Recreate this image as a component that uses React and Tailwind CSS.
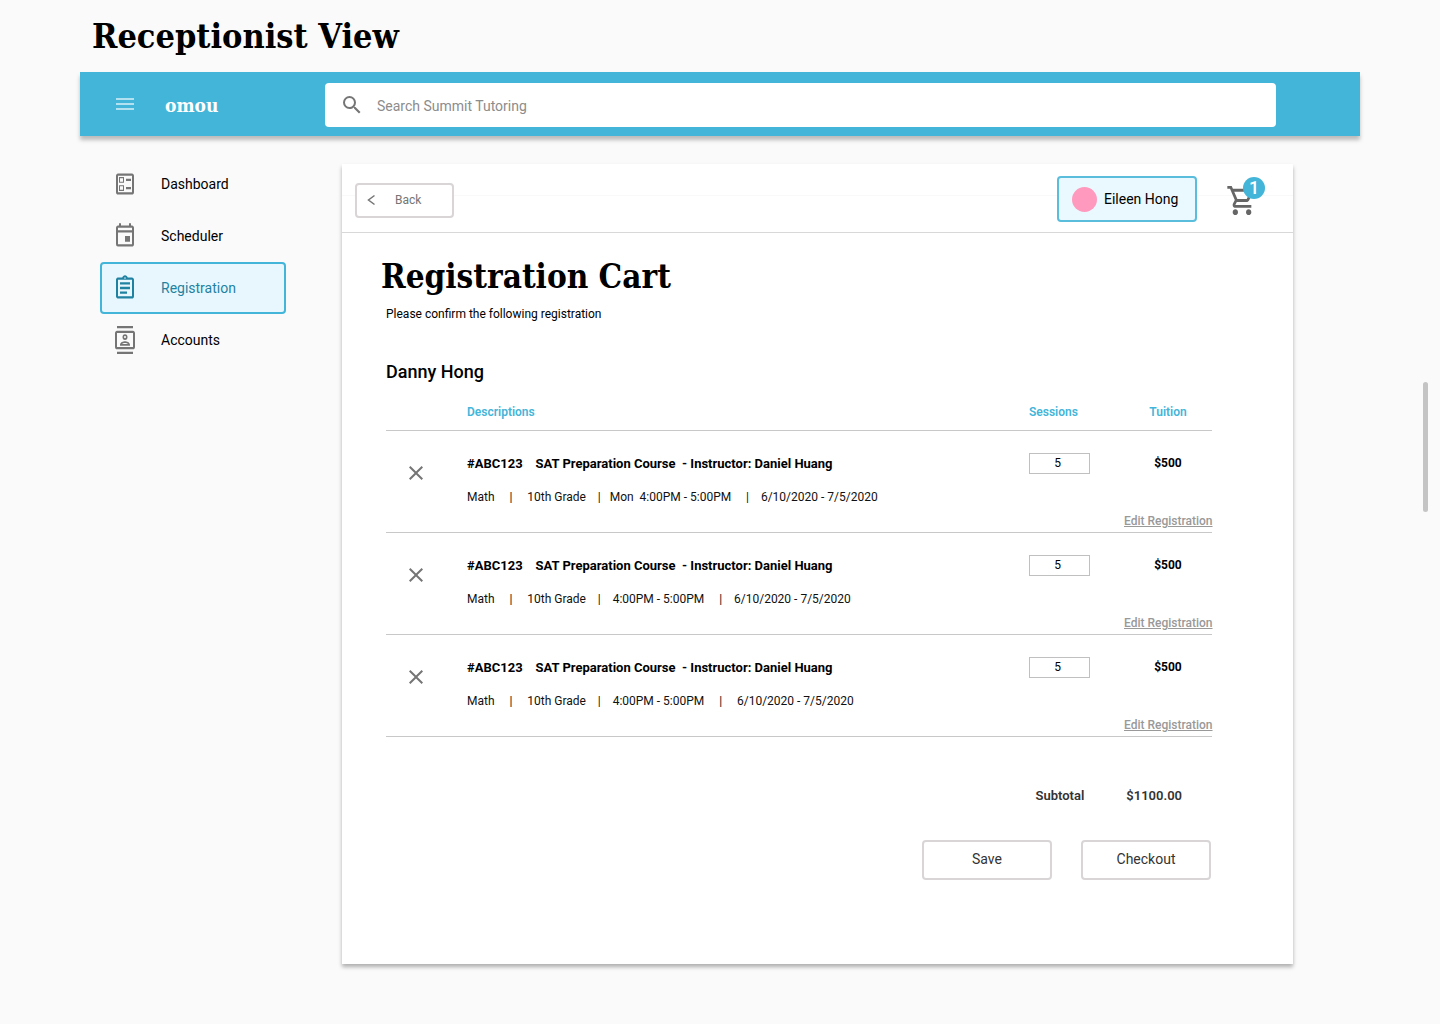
import {
  MdClose,
  MdMenu,
  MdOutlineAssignment,
  MdOutlineBallot,
  MdOutlineContacts,
  MdOutlineInsertInvitation,
  MdOutlineShoppingCart,
  MdSearch,
} from "react-icons/md";

const navItems = [
  { label: "Dashboard", Icon: MdOutlineBallot },
  { label: "Scheduler", Icon: MdOutlineInsertInvitation },
  { label: "Registration", Icon: MdOutlineAssignment, active: true },
  { label: "Accounts", Icon: MdOutlineContacts },
];

const title = "#ABC123    SAT Preparation Course  - Instructor: Daniel Huang";

const registrations = [
  { id: 1, details: "Math     |     10th Grade    |   Mon  4:00PM - 5:00PM     |    6/10/2020 - 7/5/2020" },
  { id: 2, details: "Math     |     10th Grade    |    4:00PM - 5:00PM     |    6/10/2020 - 7/5/2020" },
  { id: 3, details: "Math     |     10th Grade    |    4:00PM - 5:00PM     |     6/10/2020 - 7/5/2020" },
];

function TopBar() {
  return (
    <header className="flex h-16 items-center bg-[#43b5d9] pr-[84px] shadow-[0_4px_4px_rgba(0,0,0,0.25)]">
      <div className="flex w-[245px] shrink-0 items-center pl-[33px]">
        <button type="button" aria-label="Menu" className="text-white/60">
          <MdMenu className="size-6" />
        </button>
        <a href="#home" className="mt-0.5 ml-7 font-['Roboto_Slab','DejaVu_Serif_Condensed','DejaVu_Serif',serif] text-[19px] leading-6 font-bold text-white">
          omou
        </a>
      </div>
      <div className="mt-0.5 flex h-11 flex-1 items-center gap-[13px] rounded bg-white pl-[15px]">
        <MdSearch className="size-6 text-[#757575]" aria-hidden="true" />
        <input
          type="search"
          aria-label="Search"
          placeholder="Search Summit Tutoring"
          className="h-full min-w-0 flex-1 bg-transparent pt-0.5 text-sm text-black outline-none placeholder:text-[#8c8c8c]"
        />
      </div>
    </header>
  );
}

function Sidebar() {
  return (
    <nav className="mt-[22px] ml-5 w-[186px] shrink-0">
      {navItems.map(({ label, Icon, active }) => (
        <a
          key={label}
          href={"#" + label.toLowerCase()}
          aria-current={active ? "page" : undefined}
          className={
            "flex h-[52px] items-center gap-6 rounded border-2 pl-[11px] text-sm " +
            (active ? "border-[#43b5d9] bg-[#e8f7fe] text-[#1f82a1]" : "border-transparent text-black")
          }
        >
          <Icon
            preserveAspectRatio="none"
            aria-hidden="true"
            className={active ? "h-7 w-6 text-[#1f82a1]" : "h-7 w-6 text-[#757575]"}
          />
          {label}
        </a>
      ))}
    </nav>
  );
}

function Toolbar() {
  return (
    <div className="flex h-[69px] items-center border-b border-[#d8d8d8] bg-[linear-gradient(#f9f9f9,#f9f9f9)] bg-[length:100%_1px] bg-[position:0_31px] bg-no-repeat pr-7 pl-[13px]">
      <button
        type="button"
        className="mt-1 flex h-[35px] w-[99px] items-center rounded border-2 border-[#d9d5d7] bg-white pl-[10px] text-xs text-[#757575]"
      >
        <svg viewBox="0 0 8 12" className="h-3 w-2" fill="none" stroke="currentColor" strokeWidth="1.5" aria-hidden="true">
          <path d="M7.5 1.5 1.5 6l6 4.5" />
        </svg>
        <span className="ml-5">Back</span>
      </button>
      <button
        type="button"
        className="mt-0.5 ml-auto flex h-[46px] w-[140px] items-center gap-[7px] rounded border-2 border-[#5abddb] bg-[#eaf9ff] pl-[13px] text-sm whitespace-nowrap text-black"
      >
        <span className="size-[25px] rounded-full bg-[#ff99bd]" />
        Eileen Hong
      </button>
      <button type="button" aria-label="Cart, 1 item" className="relative mt-1 ml-[29px] h-[35px] w-[39px]">
        <MdOutlineShoppingCart preserveAspectRatio="none" className="h-[35px] w-8 text-[#666]" />
        <span className="absolute -top-1.5 right-0 flex size-[22px] items-center justify-center rounded-full bg-[#43b5d9] text-lg leading-none font-medium text-white">
          1
        </span>
      </button>
    </div>
  );
}

function RegistrationTable() {
  return (
    <table className="mt-5 w-full table-fixed border-collapse text-left">
      <colgroup>
        <col className="w-[81px]" />
        <col />
        <col className="w-[95px]" />
        <col className="w-[88px]" />
      </colgroup>
      <thead>
        <tr className="h-[26px] border-b border-[#c8c8c8] align-top text-xs text-[#43b5d9]">
          <td />
          <th scope="col" className="font-semibold">Descriptions</th>
          <th scope="col" className="font-semibold">Sessions</th>
          <th scope="col" className="text-center font-semibold">Tuition</th>
        </tr>
      </thead>
      <tbody>
        {registrations.map(({ id, details }) => (
          <tr key={id} className="h-[102px] border-b border-[#c8c8c8] align-top">
            <td className="pt-[30px] pl-[18px]">
              <button type="button" aria-label="Remove registration" className="block text-[#757575]">
                <MdClose className="size-6" />
              </button>
            </td>
            <td className="pt-[23px] whitespace-pre">
              <p className="text-[13px] leading-5 font-bold">{title}</p>
              <p className="mt-[15px] text-xs leading-4 text-[#111]">{details}</p>
            </td>
            <td className="pt-[22px]">
              <input
                type="text"
                inputMode="numeric"
                aria-label="Sessions"
                defaultValue="5"
                className="block h-[21px] w-[61px] border border-[#c0c0c0] bg-white pr-1 text-center text-xs"
              />
            </td>
            <td className="pt-[22px]">
              <p className="text-center text-xs leading-5 font-bold">$500</p>
              <a href="#edit" className="mt-10 block text-right text-xs leading-4 font-medium whitespace-nowrap text-[#999] underline">
                Edit Registration
              </a>
            </td>
          </tr>
        ))}
      </tbody>
    </table>
  );
}

export default function App() {
  return (
    <div className="relative min-h-screen bg-[#fafafa] px-20 pb-[60px] font-[Roboto,sans-serif] text-black">
      <h1 className="h-[72px] pt-3 pl-3 font-['Roboto_Slab','DejaVu_Serif_Condensed','DejaVu_Serif',serif] text-[34px] leading-[48px] font-bold">
        Receptionist View
      </h1>
      <TopBar />
      <div className="flex">
        <Sidebar />
        <main className="mt-7 mr-[67px] ml-14 min-w-0 flex-1 bg-white pb-[84px] shadow-[0_3px_4px_rgba(0,0,0,0.3)]">
          <Toolbar />
          <div className="pr-[81px] pl-11">
            <h2 className="-ml-[5px] pt-5 font-['Roboto_Slab','DejaVu_Serif_Condensed','DejaVu_Serif',serif] text-[33px] leading-[48px] font-bold">
              Registration Cart
            </h2>
            <p className="mt-[5px] text-xs leading-4">Please confirm the following registration</p>
            <h3 className="mt-[38px] text-lg leading-6 font-medium">Danny Hong</h3>
            <RegistrationTable />
            <div className="mt-[49px] flex justify-end gap-[42px] pr-[30px] text-[13px] leading-5 font-semibold text-[#333]">
              <span>Subtotal</span>
              <span>$1100.00</span>
            </div>
            <div className="mt-[34px] flex justify-end gap-[29px] pr-px text-sm text-[#333]">
              <button type="button" className="h-10 w-[130px] rounded border-2 border-[#d9d5d7] bg-white pb-0.5">
                Save
              </button>
              <button type="button" className="h-10 w-[130px] rounded border-2 border-[#d9d5d7] bg-white pb-0.5">
                Checkout
              </button>
            </div>
          </div>
        </main>
      </div>
      <div className="absolute top-[382px] right-3 h-[130px] w-[5px] rounded-full bg-[#c4c4c4]" />
    </div>
  );
}
